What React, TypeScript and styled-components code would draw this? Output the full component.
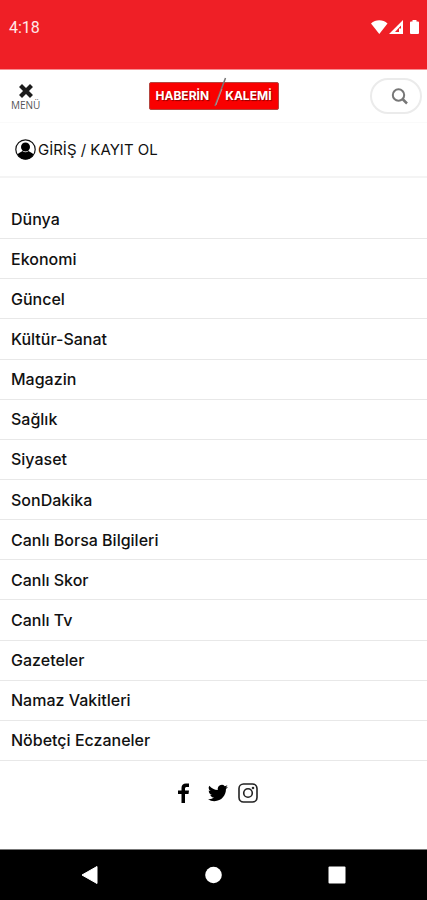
import React from "react";
import styled, { createGlobalStyle } from "styled-components";

const GlobalStyle = createGlobalStyle`
  *, *::before, *::after { box-sizing: border-box; }
  body { margin: 0; background: #fff; color: #111; font-family: Inter, "Open Sans", sans-serif; }
  button { padding: 0; border: 0; background: none; color: inherit; font: inherit; cursor: pointer; }
  a { color: inherit; text-decoration: none; }
  svg { display: block; flex: none; }
`;

const Screen = styled.div`
  display: flex;
  flex-direction: column;
  min-height: 100vh;
`;

const StatusBar = styled.div`
  display: flex;
  justify-content: space-between;
  height: 70px;
  padding: 18px 7px 0 9px;
  background: #ef1f26;
  border-bottom: 1px solid #f78f92;
  color: #fff;
`;

const Clock = styled.time`
  font: 400 16px/20px Roboto, sans-serif;
  color: #ffe9e9;
`;

const StatusIcons = styled.div`
  display: flex;
  height: 18px;
  align-items: center;
`;

const Header = styled.header`
  display: grid;
  grid-template-columns: 1fr auto 1fr;
  align-items: center;
  height: 53px;
  padding: 0 5px;
  border-bottom: 1px solid #fafafa;
`;

const MenuButton = styled.button`
  display: flex;
  flex-direction: column;
  align-items: center;
  justify-self: start;
  gap: 1px;
  padding: 3px 6px 0;
`;

const MenuLabel = styled.span`
  font: 400 10px/12px "Open Sans", sans-serif;
  color: #555;
`;

const Logo = styled.a`
  position: relative;
  display: flex;
  align-items: center;
  justify-content: space-between;
  width: 130px;
  height: 28px;
  padding: 0 6px;
  border: 1px solid #b5453f;
  border-radius: 2px;
  background: #f90000;
  color: #fff;
  font: 700 12px/16px Inter, sans-serif;
  text-shadow: 1px 1px 1px #8a0000;
`;

const Slash = styled.svg`
  position: absolute;
  left: 64px;
  top: -6px;
`;

const SearchButton = styled.button`
  display: flex;
  align-items: center;
  justify-content: flex-end;
  justify-self: end;
  width: 52px;
  height: 36px;
  padding-right: 12px;
  border: 2px solid #ebebeb;
  border-radius: 18px;
`;

const Account = styled.a`
  display: flex;
  align-items: center;
  gap: 2px;
  height: 55px;
  padding: 0 15px;
  border-bottom: 2px solid #f4f4f4;
  font-size: 15px;
  line-height: 24px;
`;

const Menu = styled.nav`
  display: flex;
  flex: 1;
  padding-top: 21px;
`;

const MenuList = styled.ul`
  display: flex;
  flex: 1;
  flex-direction: column;
  margin: 0;
  padding: 0;
  list-style: none;
`;

const MenuItem = styled.li`
  display: flex;
  flex: 1;
  min-height: 40px;
  border-bottom: 1px solid #e8e8e8;
`;

const MenuLink = styled.a`
  display: flex;
  flex: 1;
  align-items: center;
  padding: 0 11px;
  font-size: 16px;
  font-weight: 500;
  line-height: 24px;
`;

const Social = styled.footer`
  display: flex;
  align-items: center;
  justify-content: center;
  gap: 10px;
  height: 88px;
  padding: 0 0 24px 8px;
`;

const SystemBar = styled.div`
  display: grid;
  grid-template-columns: repeat(3, 1fr);
  height: 51px;
  padding: 0 28px;
  background: #000;
  border-top: 1px solid #777;
`;

const SystemButton = styled.button`
  display: flex;
  align-items: center;
  justify-content: center;
`;

const items = [
  "Dünya",
  "Ekonomi",
  "Güncel",
  "Kültür-Sanat",
  "Magazin",
  "Sağlık",
  "Siyaset",
  "SonDakika",
  "Canlı Borsa Bilgileri",
  "Canlı Skor",
  "Canlı Tv",
  "Gazeteler",
  "Namaz Vakitleri",
  "Nöbetçi Eczaneler",
];

export default function App() {
  return (
    <Screen lang="tr">
      <GlobalStyle />
      <StatusBar>
        <Clock>4:18</Clock>
        <StatusIcons>
          <svg width="49" height="16" viewBox="0 0 49 16" fill="#fff" aria-hidden="true">
            <path d="M0 4.500C4.500.2 12 .2 16.500 4.500L8.300 15Z" />
            <path fillRule="evenodd" d="M32 1V15H18ZM30 6.500 24 13H28V9.500H30Z" />
            <path d="M41.500 1H45.500V2.500H47A1 1 0 0 1 48 3.500V14A1 1 0 0 1 47 15H40A1 1 0 0 1 39 14V3.500A1 1 0 0 1 40 2.500H41.500Z" />
          </svg>
        </StatusIcons>
      </StatusBar>

      <Header>
        <MenuButton type="button" aria-expanded="true">
          <svg width="14" height="14" viewBox="0 0 14 14" aria-hidden="true">
            <path d="M3 3 11 11M11 3 3 11" stroke="#1c1c1c" strokeWidth="4.200" strokeLinecap="square" strokeLinejoin="round" />
          </svg>
          <MenuLabel>MENÜ</MenuLabel>
        </MenuButton>
        <Logo href="#" aria-label="Haberin Kalemi">
          <span>HABERİN</span>
          <span>KALEMİ</span>
          <Slash width="13" height="32" viewBox="0 0 13 32" aria-hidden="true">
            <path d="M11.500 1 1 29" stroke="#777" strokeWidth="1.500" />
            <path d="M8 12 2 28" stroke="#d99" strokeWidth=".7" />
          </Slash>
        </Logo>
        <SearchButton type="button" aria-label="Ara">
          <svg width="17" height="17" viewBox="0 0 17 17" fill="none" stroke="#777" strokeWidth="2" aria-hidden="true">
            <circle cx="7.500" cy="7" r="5.700" />
            <path d="M11.500 11 16 15.500" strokeWidth="2.500" />
          </svg>
        </SearchButton>
      </Header>

      <Account href="#">
        <svg width="21" height="21" viewBox="0 0 21 21" aria-hidden="true">
          <circle cx="10.500" cy="10.500" r="9.700" fill="#fff" stroke="#111" strokeWidth="1.200" />
          <circle cx="10.500" cy="8" r="4.500" fill="#000" />
          <path d="M2.500 15.500C4 13.500 6 13 7.500 12Q10.500 14.500 13.500 12C15 13 17 13.500 18.500 15.500Q15.500 20.500 10.500 20.500T2.500 15.500Z" fill="#000" />
        </svg>
        GİRİŞ / KAYIT OL
      </Account>

      <Menu>
        <MenuList>
          {items.map((item) => (
            <MenuItem key={item}>
              <MenuLink href="#">{item}</MenuLink>
            </MenuItem>
          ))}
        </MenuList>
      </Menu>

      <Social>
        <a href="#" aria-label="Facebook">
          <svg width="20" height="20" viewBox="4 0 20 20" aria-hidden="true">
            <path d="M7.500 20V11H4V7.500H7.500V5C7.500 2 9 .5 12 .5H15V4H13C11.500 4 11 4.500 11 5.700V7.500H15L14.500 11H11V20Z" />
          </svg>
        </a>
        <a href="#" aria-label="Twitter">
          <svg width="20" height="20" viewBox="0 0 24 24" aria-hidden="true">
            <path d="M23.950 4.570a10 10 0 0 1-2.820.770 4.960 4.960 0 0 0 2.160-2.720c-.95.550-2 .960-3.130 1.180a4.920 4.920 0 0 0-8.380 4.480C7.690 8.100 4.070 6.130 1.640 3.160a4.920 4.920 0 0 0 1.520 6.570 4.900 4.900 0 0 1-2.230-.610v.060a4.920 4.920 0 0 0 3.950 4.830 5 5 0 0 1-2.210.080 4.940 4.940 0 0 0 4.600 3.420A9.870 9.870 0 0 1 0 19.540a13.990 13.990 0 0 0 7.550 2.210c9.050 0 14-7.500 14-13.980 0-.210 0-.420-.020-.630a9.940 9.940 0 0 0 2.420-2.570Z" />
          </svg>
        </a>
        <a href="#" aria-label="Instagram">
          <svg width="20" height="20" viewBox="0 0 20 20" fill="none" stroke="#222" strokeWidth="1.600" aria-hidden="true">
            <rect x="1" y="1" width="18" height="18" rx="4.500" />
            <circle cx="10" cy="10" r="4.300" />
            <circle cx="15" cy="5" r=".5" />
          </svg>
        </a>
      </Social>

      <SystemBar>
        <SystemButton type="button" aria-label="Geri">
          <svg width="18" height="20" viewBox="0 0 18 20" aria-hidden="true">
            <path d="M16 1.500V18.500L1 10Z" fill="#fff" stroke="#fff" strokeLinejoin="round" />
          </svg>
        </SystemButton>
        <SystemButton type="button" aria-label="Ana ekran">
          <svg width="18" height="18" viewBox="0 0 18 18" aria-hidden="true">
            <circle cx="9.500" cy="9" r="8.300" fill="#fff" />
          </svg>
        </SystemButton>
        <SystemButton type="button" aria-label="Son uygulamalar">
          <svg width="18" height="18" viewBox="0 0 18 18" aria-hidden="true">
            <rect x=".5" y=".5" width="17" height="17" rx="1" fill="#fff" />
          </svg>
        </SystemButton>
      </SystemBar>
    </Screen>
  );
}
